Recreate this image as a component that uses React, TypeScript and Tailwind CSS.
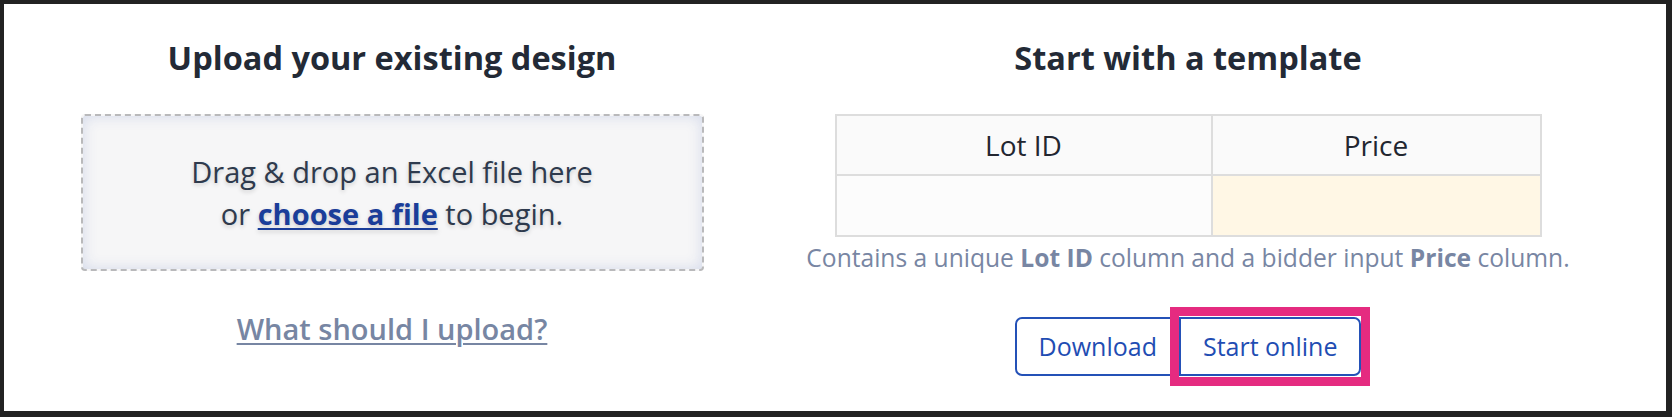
export default function App() {
  return (
    <div className="h-[417px] w-[1672px] border-t-4 border-l-4 border-r-[6px] border-b-[6px] border-[#222222] bg-white font-['Open_Sans',sans-serif]">
      <div className="grid grid-cols-[776px_816px] pt-[34px]">
        {/* Upload column */}
        <div className="flex flex-col items-center">
          <h2 className="text-[32.5px] leading-[40px] font-bold text-[#232a36]">Upload your existing design</h2>
          <div className="mt-[36px] flex h-[157px] w-[623px] items-center justify-center rounded-[4px] border-2 border-dashed border-[#b9b9bb] bg-[#f6f6f7] shadow-[inset_0_0_14px_rgba(205,212,232,0.85)]">
            <p className="text-center text-[29px] leading-[42px] text-[#2e3a4d] [text-shadow:0_2px_4px_rgba(0,0,0,0.18)]">
              Drag &amp; drop an Excel file here
              <br />
              or{" "}
              <a href="#" className="font-bold text-[#1a3d99] underline decoration-2 underline-offset-[3px]">
                choose a file
              </a>{" "}
              to begin.
            </p>
          </div>
          <a href="#" className="mt-[38px] text-[29px] leading-[40px] font-semibold text-[#7786a3] underline decoration-2 underline-offset-[3px]">
            What should I upload?
          </a>
        </div>

        {/* Template column */}
        <div className="flex flex-col items-center">
          <h2 className="text-[32.5px] leading-[40px] font-bold text-[#232a36]">Start with a template</h2>
          <div className="mt-[36px] grid w-[707px] grid-cols-[376px_327px] border-2 border-[#dddddd] text-[28px] text-[#222630]">
            <div className="flex h-[60px] items-center justify-center border-r-2 border-b-2 border-[#dddddd] bg-[#fafafa]">Lot ID</div>
            <div className="flex h-[60px] items-center justify-center border-b-2 border-[#dddddd] bg-[#fafafa]">Price</div>
            <div className="h-[59px] border-r-2 border-[#dddddd] bg-[#fcfcfc]"></div>
            <div className="h-[59px] bg-[#fff7e5]"></div>
          </div>
          <p className="mt-[5px] whitespace-nowrap text-[24.6px] leading-[32px] text-[#7886a3]">
            Contains a unique <span className="font-bold">Lot ID</span> column and a bidder input <span className="font-bold">Price</span> column.
          </p>
          <div className="mt-[43px] flex">
            <button className="h-[59px] rounded-l-[7px] border-2 border-[#2451b7] bg-white px-[22px] text-[25px] text-[#1f4db3]">
              Download
            </button>
            <button className="relative z-10 -ml-[2px] h-[59px] rounded-r-[7px] border-2 border-[#2451b7] bg-white px-[22px] text-[25px] text-[#1f4db3] before:pointer-events-none before:absolute before:-inset-x-[11px] before:-inset-y-[12px] before:border-[9px] before:border-[#e52b80] before:content-['']">
              Start online
            </button>
          </div>
        </div>
      </div>
    </div>
  );
}
